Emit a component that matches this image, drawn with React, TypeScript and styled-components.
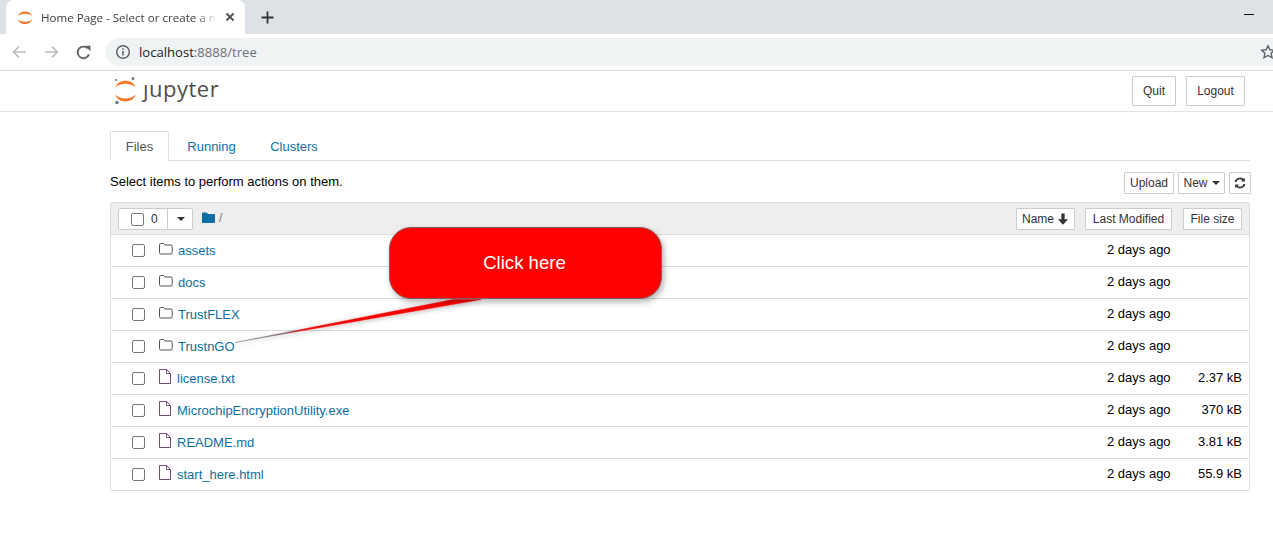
import React from "react";
import styled, { createGlobalStyle } from "styled-components";

const Global = createGlobalStyle`
  html, body { margin: 0; padding: 0; background: #fff; overflow: hidden; }
  body { font-family: "Liberation Sans", Arial, sans-serif; font-size: 13px; color: #000; }
  * { box-sizing: border-box; }
`;

const Page = styled.div`position: relative; width: 1273px; height: 541px; overflow: hidden; background: #fff;`;

const TabStrip = styled.div`height: 34px; background: #dee1e6; display: flex; align-items: flex-end; padding-left: 6px; position: relative;`;
const BrowserTab = styled.div`
  width: 239px; height: 34px; background: #fff; border-radius: 8px 8px 0 0;
  display: flex; align-items: center; padding: 0 10px 0 11px; gap: 8px;
  font-size: 12px; color: #3c4043;
`;
const TabTitle = styled.span`
  flex: 1; white-space: nowrap; overflow: hidden;
  font-family: "Open Sans", sans-serif; font-size: 11.6px;
  -webkit-mask-image: linear-gradient(to right, #000 88%, transparent 100%);
  mask-image: linear-gradient(to right, #000 88%, transparent 100%);
`;
const NewTab = styled.div`margin-left: 16px; height: 34px; display: flex; align-items: center;`;
const Minimize = styled.div`position: absolute; right: 19px; top: 14px; width: 10px; height: 1px; background: #111;`;

const Toolbar = styled.div`height: 37px; border-bottom: 1px solid #d9d9de; display: flex; align-items: flex-start; padding: 4px 0 0 12px; background: #fff;`;
const NavIcon = styled.div<{ $w: number }>`width: ${(p) => p.$w}px; height: 28px; display: flex; align-items: center; flex: none;`;
const Omnibox = styled.div`
  flex: 1; height: 28px; background: #eff3f4; border-radius: 14px 0 0 14px;
  display: flex; align-items: center; padding-left: 10px; gap: 8px; position: relative;
  font-family: "Open Sans", sans-serif; font-size: 13.1px; color: #222;
`;
const UrlRest = styled.span`color: #6c7278;`;
const Star = styled.div`position: absolute; right: -3px; top: 6px;`;

const Header = styled.div`height: 41px; border-bottom: 1px solid #e2e2e2; padding: 0 28px 0 114px; display: flex; align-items: flex-start; justify-content: space-between;`;
const Logo = styled.div`display: flex; align-items: center; height: 37px; gap: 6px; padding-top: 1px;`;
const LogoText = styled.span`font-family: "Open Sans", sans-serif; font-size: 22px; color: #4e4e4e; letter-spacing: 0.5px; line-height: 37px; margin-top: -3px;`;
const HeaderButtons = styled.div`display: flex; gap: 10px; padding-top: 5px;`;
const Btn = styled.div<{ $w: number; $h: number; $pull?: boolean }>`
  width: ${(p) => p.$w}px; height: ${(p) => p.$h}px; border: 1px solid #ccc; background: #fff;
  display: flex; align-items: center; justify-content: center; gap: 3px; font-size: 12px; color: #333; border-radius: 1px; white-space: nowrap;
  ${(p) => (p.$pull ? "margin-right: -1px;" : "")}
`;

const Container = styled.div`width: 1140px; margin-left: 110px;`;
const Tabs = styled.div`margin-top: 19px; height: 30px; border-bottom: 1px solid #ddd; display: flex; align-items: flex-start;`;
const TabItem = styled.div<{ $active?: boolean; $w: number }>`
  width: ${(p) => p.$w}px; height: 30px; font-size: 13px; text-align: center;
  line-height: ${(p) => (p.$active ? 30 : 31)}px;
  ${(p) => p.$active ? "color: #555; border: 1px solid #ddd; border-bottom: 1px solid #fff; background: #fff; border-radius: 2px 2px 0 0;" : "color: #0b6fa4;"}
`;
const ActionRow = styled.div`height: 42px; display: flex; align-items: flex-start; justify-content: space-between; padding-top: 11px;`;
const Hint = styled.div`font-size: 13px; line-height: 20px; color: #000;`;
const ActionButtons = styled.div`display: flex; gap: 4px; margin-right: -1px; align-items: center;`;

const List = styled.div`border: 1px solid #ddd; border-radius: 2px; margin-top: -1px;`;
const ListHead = styled.div`height: 32px; background: #eee; border-bottom: 1px solid #ddd; display: flex; align-items: center; padding: 0 7px; justify-content: space-between;`;
const HeadLeft = styled.div`display: flex; align-items: center; padding-top: 1px;`;
const SelectBox = styled.div`width: 75px; height: 22px; display: flex; background: #fff; border: 1px solid #ccc; border-radius: 2px; margin-right: 9px;`;
const SelectLeft = styled.div`width: 49px; border-right: 1px solid #ccc; display: flex; align-items: center; padding-left: 12px; gap: 7px; font-size: 12px; color: #333;`;
const SelectCaret = styled.div`flex: 1; display: flex; align-items: center; justify-content: center;`;
const Check = styled.div`width: 13px; height: 13px; border: 1px solid #767676; border-radius: 2px; background: #fff; flex: none;`;
const Crumb = styled.div`display: flex; align-items: center; gap: 4px; font-size: 12px; color: #777; margin-top: -3px;`;
const HeadRight = styled.div`display: flex; align-items: center; gap: 11px;`;
const Caret = styled.span`display: inline-block; width: 0; height: 0; border-left: 4px solid transparent; border-right: 4px solid transparent; border-top: 4px solid #333; margin-left: 1px;`;

const Row = styled.div`height: 32px; border-bottom: 1px solid #ddd; display: flex; align-items: center; padding-left: 21px; font-size: 13px; &:last-child { height: 31px; border-bottom: 0; }`;
const RowIcon = styled.div<{ $file?: boolean }>`width: 14px; margin-left: 14px; display: flex; align-items: center; margin-top: ${(p) => (p.$file ? -4 : -3)}px;`;
const RowName = styled.a<{ $file?: boolean }>`color: #0b6fa4; font-size: 13px; margin-left: ${(p) => (p.$file ? 4 : 5)}px; flex: 1; margin-top: -1px;`;
const RowDate = styled.div`width: 70px; padding-right: 1px; font-size: 13px; color: #000; margin-left: auto; margin-top: -3px; white-space: nowrap;`;
const RowSize = styled.div`width: 72px; text-align: right; padding-right: 7px; font-size: 13px; color: #000; margin-top: -3px; white-space: nowrap;`;

const CalloutTail = styled.svg`position: absolute; left: 0; top: 0; pointer-events: none; overflow: visible;`;
const Callout = styled.div`
  position: absolute; left: 389px; top: 227px; width: 273px; height: 72px; background: #ff0000; border-radius: 22px;
  border: 1px solid #8a5a5a; box-shadow: 2px 3px 6px rgba(0,0,0,.3);
  display: flex; align-items: center; justify-content: center; color: #fff; font-size: 18.6px; padding-right: 2px;
`;

const items = [
  { n: "assets", d: 1, s: "" },
  { n: "docs", d: 1, s: "" },
  { n: "TrustFLEX", d: 1, s: "" },
  { n: "TrustnGO", d: 1, s: "" },
  { n: "license.txt", d: 0, s: "2.37 kB" },
  { n: "MicrochipEncryptionUtility.exe", d: 0, s: "370 kB" },
  { n: "README.md", d: 0, s: "3.81 kB" },
  { n: "start_here.html", d: 0, s: "55.9 kB" },
];

const FolderIcon = () => (
  <svg width="14" height="12" viewBox="0 0 14 12" fill="none" stroke="#555" strokeWidth="1">
    <path d="M.5 3V1.5a1 1 0 0 1 1-1h3l1.5 1.5h6a1.2 1.2 0 0 1 1.2 1.2v6.6a1.2 1.2 0 0 1-1.2 1.2H1.7a1.2 1.2 0 0 1-1.2-1.2z" />
  </svg>
);
const FileIcon = () => (
  <svg width="12" height="15" viewBox="0 0 12 15" fill="none" stroke="#6d4f74" strokeWidth="1">
    <path d="M.5.5h7l4 4v10H.5z" />
    <path d="M7.5.5v4h4" />
  </svg>
);
const JupyterMark = () => (
  <svg width="23" height="29" viewBox="0 0 23 29">
    <path d="M1.5 11.5C3.5 2.5 19.5 2.5 21.5 11.5 17 6.5 6 6.5 1.5 11.5z" fill="#f37726" />
    <path d="M1.5 18.5C3.5 27.8 19.5 27.8 21.5 18.5 17 23.8 6 23.8 1.5 18.5z" fill="#f37726" />
    <circle cx="19" cy="2.5" r="1.5" fill="#767677" />
    <circle cx="2" cy="4" r="1.1" fill="#767677" />
    <circle cx="3" cy="26.5" r="1.8" fill="#767677" />
  </svg>
);

export default function App() {
  return (
    <Page>
      <Global />
      <TabStrip>
        <BrowserTab>
          <svg width="16" height="17" viewBox="0 0 16 17">
            <path d="M1 7C2.5 1 13.5 1 15 7 12 4 4 4 1 7z" fill="#f37726" />
            <path d="M1 10.5C2.5 16.5 13.5 16.5 15 10.5 12 13.5 4 13.5 1 10.5z" fill="#f37726" />
          </svg>
          <TabTitle>Home Page - Select or create a new notebook</TabTitle>
          <svg width="10" height="10" viewBox="0 0 10 10" stroke="#4a4d52" strokeWidth="1.8" fill="none">
            <path d="M1.5 1.5l7 7M8.5 1.5l-7 7" />
          </svg>
        </BrowserTab>
        <NewTab>
          <svg width="13" height="13" viewBox="0 0 13 13" stroke="#333" strokeWidth="1.8" fill="none">
            <path d="M6.5 0.5v12M0.5 6.5h12" />
          </svg>
        </NewTab>
        <Minimize />
      </TabStrip>
      <Toolbar>
        <NavIcon $w={32}>
          <svg width="15" height="14" viewBox="0 0 16 14" stroke="#b8bbbf" strokeWidth="1.7" fill="none">
            <path d="M15 7H2M7.5 1.2L1.7 7l5.8 5.8" />
          </svg>
        </NavIcon>
        <NavIcon $w={32}>
          <svg width="15" height="14" viewBox="0 0 16 14" stroke="#b8bbbf" strokeWidth="1.7" fill="none">
            <path d="M1 7h13M8.5 1.2L14.3 7l-5.8 5.8" />
          </svg>
        </NavIcon>
        <NavIcon $w={29}>
          <svg width="15" height="15" viewBox="0 0 16 16" fill="none">
            <path d="M13.8 10A6.2 6.2 0 1 1 12.4 3.6" stroke="#5f6368" strokeWidth="2" />
            <path d="M9.6.8h5.8v5.8z" fill="#5f6368" />
          </svg>
        </NavIcon>
        <Omnibox>
          <svg width="16" height="16" viewBox="0 0 16 16" fill="none">
            <circle cx="8" cy="8" r="6.3" stroke="#5f6368" strokeWidth="1.5" />
            <path d="M8 7v4.4M8 4.2v1.5" stroke="#5f6368" strokeWidth="1.6" />
          </svg>
          <span>localhost<UrlRest>:8888/tree</UrlRest></span>
          <Star>
            <svg width="16" height="16" viewBox="0 0 16 16" fill="none" stroke="#5f6368" strokeWidth="1.4">
              <path d="M8 1.8l1.9 4 4.4.5-3.2 3 .9 4.4L8 11.5l-4 2.2.9-4.4-3.2-3 4.4-.5z" />
            </svg>
          </Star>
        </Omnibox>
      </Toolbar>
      <Header>
        <Logo>
          <JupyterMark />
          <LogoText>ȷupyter</LogoText>
        </Logo>
        <HeaderButtons>
          <Btn $w={44} $h={30}>Quit</Btn>
          <Btn $w={59} $h={30}>Logout</Btn>
        </HeaderButtons>
      </Header>
      <Container>
        <Tabs>
          <TabItem $active $w={59}>Files</TabItem>
          <TabItem $w={85}>Running</TabItem>
          <TabItem $w={80}>Clusters</TabItem>
        </Tabs>
        <ActionRow>
          <Hint>Select items to perform actions on them.</Hint>
          <ActionButtons>
            <Btn $w={50} $h={22}>Upload</Btn>
            <Btn $w={47} $h={22}>New <Caret /></Btn>
            <Btn $w={22} $h={22}>
              <svg width="12" height="12" viewBox="0 0 12 12" fill="none" stroke="#333" strokeWidth="1.7">
                <path d="M1.5 5A4.6 4.6 0 0 1 9.8 3.5M10.5 7A4.6 4.6 0 0 1 2.2 8.5" />
                <path d="M10.8.8v3.7H7.1z" fill="#333" stroke="none" />
                <path d="M1.2 11.2V7.5h3.7z" fill="#333" stroke="none" />
              </svg>
            </Btn>
          </ActionButtons>
        </ActionRow>
        <List>
          <ListHead>
            <HeadLeft>
              <SelectBox>
                <SelectLeft><Check />0</SelectLeft>
                <SelectCaret><Caret /></SelectCaret>
              </SelectBox>
              <Crumb>
                <svg width="13" height="11" viewBox="0 0 13 11"><path d="M0 1.5A1 1 0 0 1 1 .5h3.5L6 2h6a1 1 0 0 1 1 1v7a1 1 0 0 1-1 1H1a1 1 0 0 1-1-1z" fill="#0b6fa4" /></svg>
                /
              </Crumb>
            </HeadLeft>
            <HeadRight>
              <Btn $w={59} $h={22} $pull>
                Name
                <svg width="12" height="12" viewBox="0 0 11 11" fill="#333"><path d="M4 0.5h3v5.3h3.2L5.5 10.8 0.8 5.8H4z" /></svg>
              </Btn>
              <Btn $w={87} $h={22}>Last Modified</Btn>
              <Btn $w={59} $h={22}>File size</Btn>
            </HeadRight>
          </ListHead>
          {items.map((it) => (
            <Row key={it.n}>
              <Check />
              <RowIcon $file={!it.d}>{it.d ? <FolderIcon /> : <FileIcon />}</RowIcon>
              <RowName $file={!it.d}>{it.n}</RowName>
              <RowDate>2 days ago</RowDate>
              <RowSize>{it.s}</RowSize>
            </Row>
          ))}
        </List>
      </Container>
      <CalloutTail width="1273" height="541">
        <defs>
          <linearGradient id="tail" x1="235" y1="342" x2="480" y2="298" gradientUnits="userSpaceOnUse">
            <stop offset="0" stopColor="#888" />
            <stop offset="0.2" stopColor="#7d6a6e" />
            <stop offset="0.3" stopColor="#f00808" />
            <stop offset="1" stopColor="#ff0000" />
          </linearGradient>
          <filter id="ts" x="-5%" y="-30%" width="110%" height="170%">
            <feDropShadow dx="0" dy="1" stdDeviation="2.5" floodColor="#000" floodOpacity="0.3" />
          </filter>
        </defs>
        <path d="M235 342.5L453 299.5H481z" fill="url(#tail)" stroke="url(#tail)" strokeWidth="0.4" filter="url(#ts)" />
      </CalloutTail>
      <Callout>Click here</Callout>
    </Page>
  );
}
